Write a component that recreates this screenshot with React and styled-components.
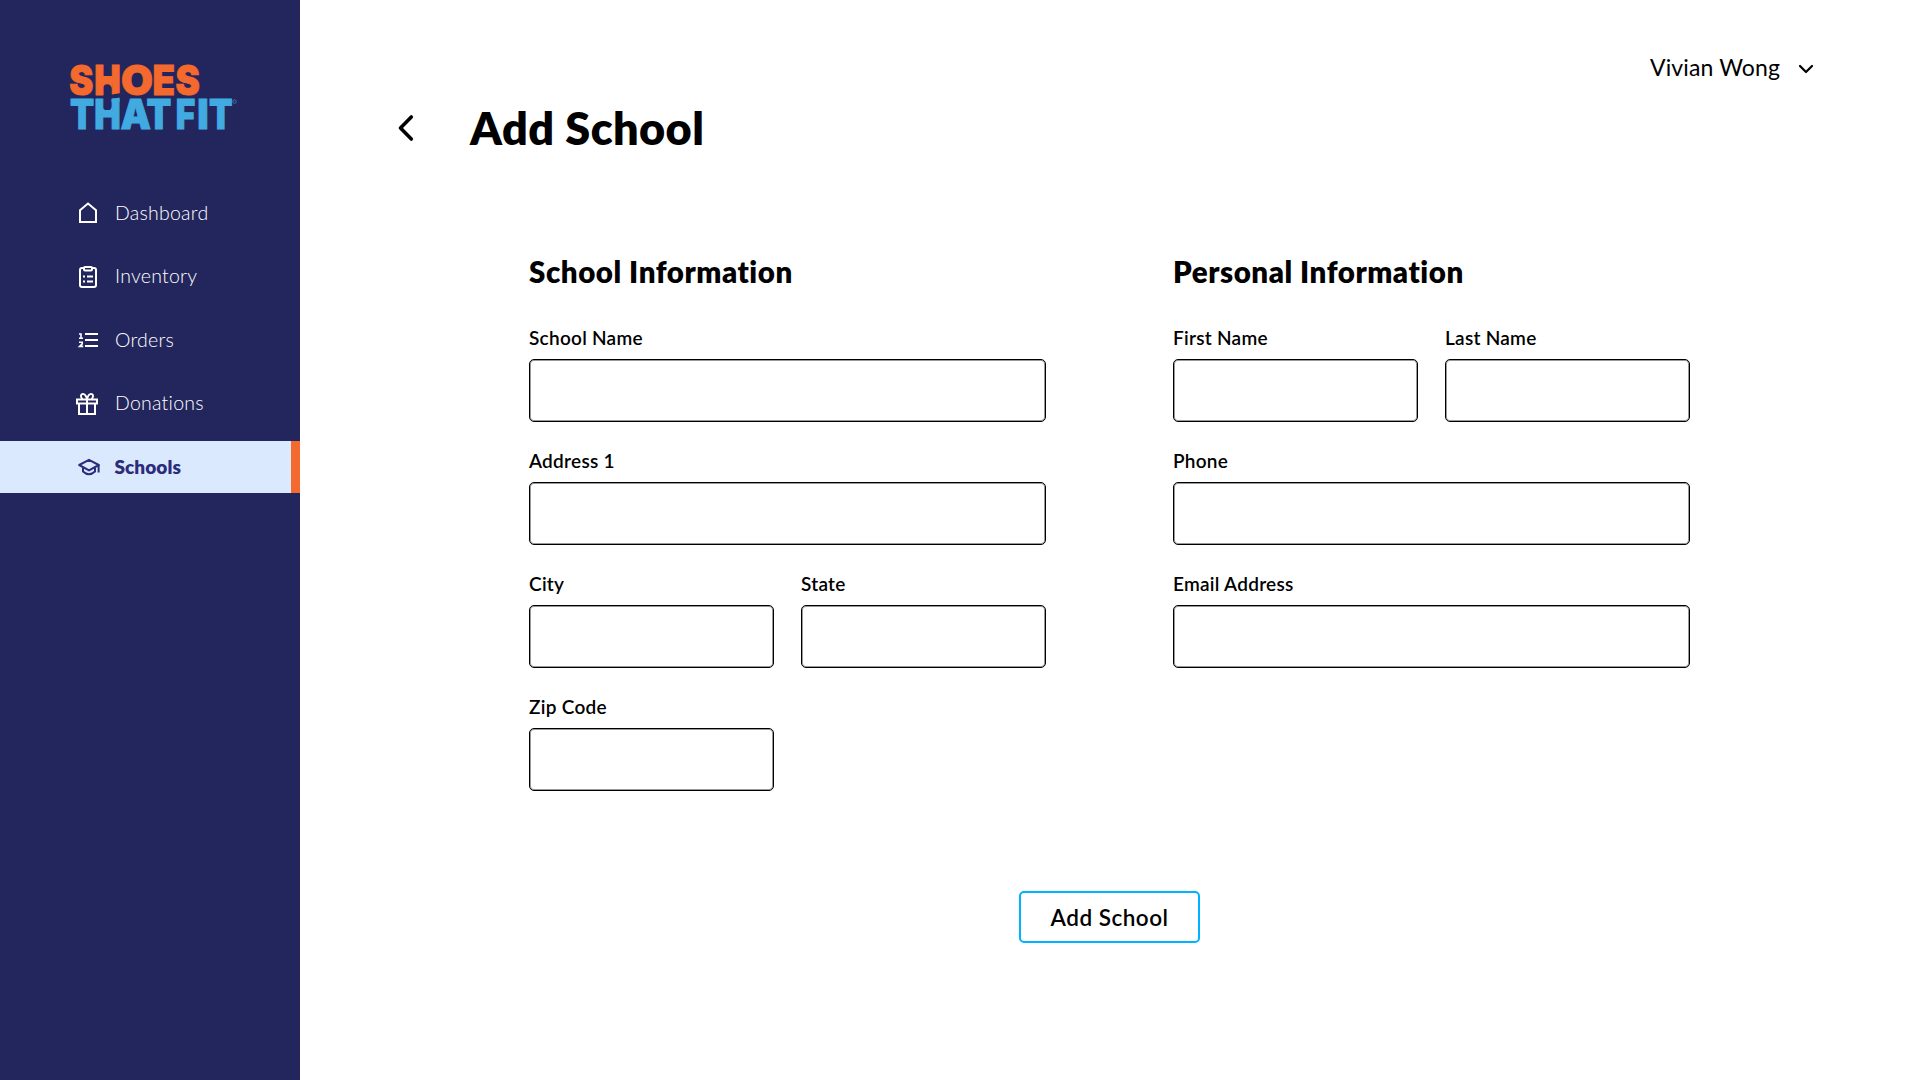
import React from "react";
import styled, { createGlobalStyle } from "styled-components";

const navy = "#23265c";
const orange = "#f4692d";
const sky = "#41abe1";

const GlobalStyle = createGlobalStyle`
  * { box-sizing: border-box; }
  body {
    margin: 0;
    background: #fff;
    color: #000;
    font-family: Lato, "Liberation Sans", sans-serif;
  }
`;

const Layout = styled.div`
  display: grid;
  grid-template-columns: 300px 1fr;
  height: 1080px;
  overflow: hidden;
`;

const Sidebar = styled.aside`
  display: flex;
  flex-direction: column;
  background: ${navy};
`;

const Brand = styled.div`
  padding: 48px 0 0 66px;
  height: 187px;
`;

const Nav = styled.nav`
  display: flex;
  flex-direction: column;
  gap: 11.5px;
`;

const NavItem = styled.a`
  display: flex;
  align-items: center;
  gap: 12.5px;
  height: 52px;
  padding-left: 74px;
  font-size: ${(p) => (p.$active ? 19 : 19.5)}px;
  font-weight: ${(p) => (p.$active ? 800 : 300)};
  letter-spacing: ${(p) => (p.$active ? 0.05 : 0.25)}px;
  color: ${(p) => (p.$active ? "#2c2c7a" : "#fff")};
  background: ${(p) => (p.$active ? "#dbe9ff" : "transparent")};
  border-right: 9px solid ${(p) => (p.$active ? orange : "transparent")};
  svg { flex: none; }
`;

const NavLabel = styled.span`
  padding-bottom: ${(p) => (p.$active ? 1 : 2)}px;
  padding-left: ${(p) => (p.$active ? 0 : 0.5)}px;
`;

const Main = styled.main`
  display: flex;
  flex-direction: column;
`;

const TopBar = styled.header`
  display: flex;
  justify-content: flex-end;
  padding: 48px 104px 0 0;
`;

const UserMenu = styled.button`
  display: flex;
  align-items: center;
  gap: 16px;
  height: 38px;
  padding: 0;
  border: 0;
  background: none;
  color: #000;
  font: 400 23px Lato, "Liberation Sans", sans-serif;
  letter-spacing: 0.12px;
  svg { margin-top: 1px; }
`;

const TitleRow = styled.div`
  display: flex;
  align-items: center;
  gap: 52px;
  height: 54px;
  margin-top: 14px;
  padding-left: 94px;
`;

const Title = styled.h1`
  margin: 0;
  padding-top: 2px;
  font-size: 45px;
  line-height: 54px;
  font-weight: 800;
  letter-spacing: 0.42px;
`;

const Form = styled.form`
  display: grid;
  grid-template-columns: 517px 517px;
  column-gap: 127px;
  margin-top: 100px;
  padding-left: 229px;
`;

const Section = styled.section`
  display: flex;
  flex-direction: column;
`;

const Heading = styled.h2`
  margin: 0 0 36px;
  font-size: 29.5px;
  line-height: 36px;
  font-weight: 800;
  letter-spacing: 0.55px;
`;

const Fields = styled.div`
  display: grid;
  grid-template-columns: 1fr 1fr;
  gap: 26px 27px;
`;

const Field = styled.label`
  display: flex;
  flex-direction: column;
  gap: 9px;
  grid-column: ${(p) => (p.$wide ? "span 2" : "span 1")};
`;

const Label = styled.span`
  font-size: 19px;
  line-height: 24px;
  font-weight: 600;
  letter-spacing: 0.27px;
`;

const Input = styled.input`
  width: 100%;
  height: 63px;
  margin-bottom: 1px;
  padding: 0 16px;
  border: 1px solid #000;
  border-radius: 5px;
  box-shadow: inset 0 0 0 1px #999;
  outline: none;
  background: #fff;
  font: 400 19px Lato, "Liberation Sans", sans-serif;
`;

const Actions = styled.div`
  display: flex;
  justify-content: center;
  grid-column: 1 / -1;
  margin-top: 99px;
`;

const Submit = styled.button`
  width: 181px;
  height: 52px;
  padding: 0;
  border: 2px solid #00b2ff;
  border-radius: 5px;
  background: #fff;
  color: #000;
  font: 600 22.5px Lato, "Liberation Sans", sans-serif;
  letter-spacing: 0.5px;
`;

const Wordmark = styled.text`
  font-family: Inter, "Liberation Sans", sans-serif;
  font-size: 41px;
  font-weight: 900;
  stroke-width: 0.9px;
`;

/* Each letter: [character, left edge, advance] */
const shoes = [["S", 3.3, 24], ["H", 28.3, 26.5], ["O", 55, 32], ["E", 86.5, 22.5], ["S", 109.5, 24.3]];
const thatFit = [["T", 4, 24.2], ["H", 28.3, 26.5], ["A", 54.5, 30.5], ["T", 80.5, 24.8], [" ", 106, 4], ["F", 109.8, 19.5], ["I", 131.3, 11.4], ["T", 143, 23.6]];

const Letters = ({ items }) =>
  items.map(([c, x, w], i) => (
    <tspan key={i} x={x} textLength={w} lengthAdjust="spacingAndGlyphs">{c}</tspan>
  ));

const Logo = () => (
  <svg width="180" height="100" viewBox="0 -12 180 100">
    <Wordmark y="35" fill={orange} stroke={orange}><Letters items={shoes} /></Wordmark>
    <path d="M36.5 22h9.5v7a4.75 4.75 0 0 0-9.5 0z" fill={orange} />
    <path d="M28 37.2 54 33.2V39H28z" fill={navy} />
    <Wordmark y="69" fill={sky} stroke={sky}><Letters items={thatFit} /></Wordmark>
    <path d="M36.5 53h9.5v-7a4.75 4.75 0 0 1-9.5 0z" fill={sky} />
    <path d="M45.600 39l7.9-1.4V42h-7.900z" fill={sky} />
    <circle cx="168.6" cy="41.6" r="1.7" fill="none" stroke={sky} strokeWidth="0.7" opacity="0.8" />
  </svg>
);

const Icon = ({ children }) => (
  <svg width="28" height="28" viewBox="0 0 28 28" fill="none" stroke="currentColor" strokeWidth="2">{children}</svg>
);

const HomeIcon = () => <Icon><path d="M6 23V11.2l8-6.6 8 6.6V23z" /></Icon>;

const InventoryIcon = () => (
  <Icon>
    <rect x="6" y="5" width="16" height="19" rx="2" />
    <rect x="10" y="4" width="8" height="3.6" rx="1" fill={navy} />
    <path d="M9 13.5h2M13 13.5h6M9 18.5h2M13 18.5h6" />
  </Icon>
);

const OrdersIcon = () => (
  <Icon>
    <path d="M11 8h13M11 14h13M11 20h13" />
    <path d="M5 8h2v4.2M5 12.2h4M5 16.3h3.2v1.6L5.6 20.4h3.6" strokeWidth="1.6" />
  </Icon>
);

const GiftIcon = () => (
  <Icon>
    <path d="M3 9.5h20v4H3zM5 13.5V24h16V13.5M13 9.5V24" />
    <path d="M13 9.5C12 3.2 7 2.6 7 6c0 1.5.6 2.6 1.6 3.3M13 9.5C14 3.2 19 2.6 19 6c0 1.5-.6 2.6-1.6 3.3" />
  </Icon>
);

const SchoolIcon = () => (
  <Icon>
    <path d="M5.2 12 15 6.8 24.8 12 15 17.4z" strokeLinejoin="round" />
    <path d="M9 14.5V18.5Q15 24 21 18.5V14.5M24.6 12V19.5" />
  </Icon>
);

const nav = [
  ["Dashboard", HomeIcon],
  ["Inventory", InventoryIcon],
  ["Orders", OrdersIcon],
  ["Donations", GiftIcon],
  ["Schools", SchoolIcon],
];

const TextField = ({ label, wide }) => (
  <Field $wide={wide}>
    <Label>{label}</Label>
    <Input type="text" />
  </Field>
);

export default function App() {
  return (
    <Layout>
      <GlobalStyle />
      <Sidebar>
        <Brand><Logo /></Brand>
        <Nav>
          {nav.map(([name, Glyph]) => (
            <NavItem key={name} $active={name === "Schools"}>
              <Glyph />
              <NavLabel $active={name === "Schools"}>{name}</NavLabel>
            </NavItem>
          ))}
        </Nav>
      </Sidebar>
      <Main>
        <TopBar>
          <UserMenu>
            Vivian Wong
            <svg width="20" height="20" viewBox="0 0 20 20" fill="none" stroke="#000" strokeWidth="2.2" strokeLinecap="round" strokeLinejoin="round">
              <path d="M4 8l6 6 6-6" />
            </svg>
          </UserMenu>
        </TopBar>
        <TitleRow>
          <svg width="24" height="32" viewBox="0 0 24 32" fill="none" stroke="#000" strokeWidth="3.6" strokeLinecap="round" strokeLinejoin="round">
            <path d="M17.3 6 6.5 17 17.3 28" />
          </svg>
          <Title>Add School</Title>
        </TitleRow>
        <Form>
          <Section>
            <Heading>School Information</Heading>
            <Fields>
              <TextField label="School Name" wide />
              <TextField label="Address 1" wide />
              <TextField label="City" />
              <TextField label="State" />
              <TextField label="Zip Code" />
            </Fields>
          </Section>
          <Section>
            <Heading>Personal Information</Heading>
            <Fields>
              <TextField label="First Name" />
              <TextField label="Last Name" />
              <TextField label="Phone" wide />
              <TextField label="Email Address" wide />
            </Fields>
          </Section>
          <Actions><Submit type="button">Add School</Submit></Actions>
        </Form>
      </Main>
    </Layout>
  );
}
